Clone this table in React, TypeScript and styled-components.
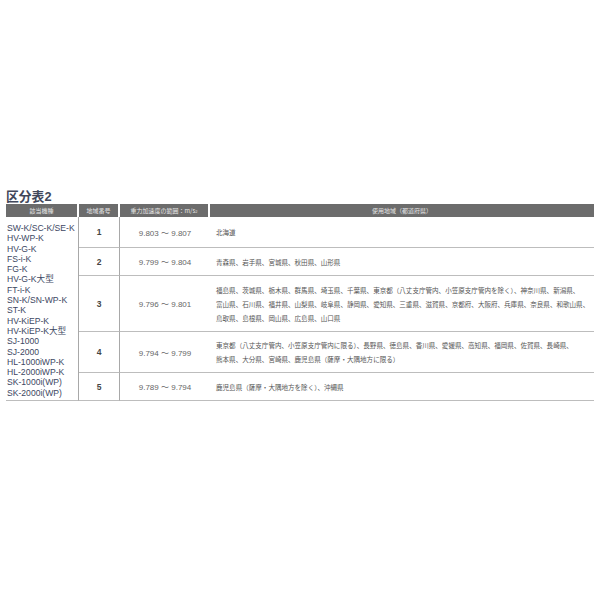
import styled, { createGlobalStyle } from "styled-components";

const GlobalStyle = createGlobalStyle`
  html, body {
    margin: 0;
    padding: 0;
    background: #ffffff;
  }
`;

const Page = styled.div`
  width: 600px;
  height: 600px;
  padding: 190px 6px 0 6px;
  box-sizing: border-box;
  font-family: "Liberation Sans", "Noto Sans CJK JP", sans-serif;
`;

const Title = styled.h2`
  margin: 0;
  font-size: 12.8px;
  line-height: 14px;
  font-weight: 700;
  color: #41475a;
  font-family: "Liberation Sans", "Noto Sans CJK JP", sans-serif;
`;

const Table = styled.div`
  display: grid;
  grid-template-columns: 73px 41px 90px 384px;
  grid-template-rows: 13px 31px 28px 56px 41px 28px;
  width: 588px;
`;

const HeadCell = styled.div<{ last?: boolean }>`
  background: #6c6c6c;
  color: #e6e6e6;
  font-family: "Noto Sans CJK JP", sans-serif;
  font-size: 6px;
  display: flex;
  align-items: center;
  justify-content: center;
  white-space: nowrap;
  border-right: ${(p) => (p.last ? "none" : "2px solid #ffffff")};
  sup {
    font-size: 4px;
    line-height: 0;
  }
`;

const ModelCell = styled.div`
  grid-column: 1;
  grid-row: 2 / 7;
  border-right: 1px solid #a8a8a8;
  border-bottom: 1px solid #bdbdbd;
  padding: 6px 0 0 1px;
  display: flex;
  flex-direction: column;
`;

const Model = styled.span`
  font-size: 8.6px;
  line-height: 10.3px;
  color: #3c4762;
  white-space: nowrap;
`;

const NumCell = styled.div`
  border-right: 1px solid #a8a8a8;
  border-bottom: 1px solid #bdbdbd;
  display: flex;
  align-items: center;
  justify-content: center;
  font-size: 8.5px;
  font-weight: 700;
  color: #454545;
`;

const RangeCell = styled.div`
  border-bottom: 1px solid #bdbdbd;
  display: flex;
  align-items: center;
  justify-content: center;
  font-size: 8px;
  color: #666666;
  white-space: nowrap;
`;

const AreaCell = styled.div`
  border-bottom: 1px solid #bdbdbd;
  display: flex;
  flex-direction: column;
  justify-content: center;
  padding-left: 6px;
  overflow: hidden;
`;

const AreaLine = styled.span`
  font-family: "Noto Sans CJK JP", sans-serif;
  font-size: 6.55px;
  line-height: 14px;
  color: #555555;
  white-space: nowrap;
`;

const models = [
  "SW-K/SC-K/SE-K",
  "HV-WP-K",
  "HV-G-K",
  "FS-i-K",
  "FG-K",
  "HV-G-K大型",
  "FT-i-K",
  "SN-K/SN-WP-K",
  "ST-K",
  "HV-KiEP-K",
  "HV-KiEP-K大型",
  "SJ-1000",
  "SJ-2000",
  "HL-1000iWP-K",
  "HL-2000iWP-K",
  "SK-1000i(WP)",
  "SK-2000i(WP)",
];

const rows = [
  { no: "1", range: "9.803 ～ 9.807", areas: ["北海道"] },
  { no: "2", range: "9.799 ～ 9.804", areas: ["青森県、岩手県、宮城県、秋田県、山形県"] },
  {
    no: "3",
    range: "9.796 ～ 9.801",
    areas: [
      "福島県、茨城県、栃木県、群馬県、埼玉県、千葉県、東京都（八丈支庁管内、小笠原支庁管内を除く）、神奈川県、新潟県、",
      "富山県、石川県、福井県、山梨県、岐阜県、静岡県、愛知県、三重県、滋賀県、京都府、大阪府、兵庫県、奈良県、和歌山県、",
      "鳥取県、島根県、岡山県、広島県、山口県",
    ],
  },
  {
    no: "4",
    range: "9.794 ～ 9.799",
    areas: [
      "東京都（八丈支庁管内、小笠原支庁管内に限る）、長野県、徳島県、香川県、愛媛県、高知県、福岡県、佐賀県、長崎県、",
      "熊本県、大分県、宮崎県、鹿児島県（薩摩・大隅地方に限る）",
    ],
  },
  { no: "5", range: "9.789 ～ 9.794", areas: ["鹿児島県（薩摩・大隅地方を除く）、沖縄県"] },
];

export default function App() {
  return (
    <>
      <GlobalStyle />
      <Page>
        <Title>区分表2</Title>
        <Table>
          <HeadCell>該当機種</HeadCell>
          <HeadCell>地域番号</HeadCell>
          <HeadCell>
            重力加速度の範囲：m/s<sup>2</sup>
          </HeadCell>
          <HeadCell last>使用地域（都道府県）</HeadCell>
          <ModelCell>
            {models.map((m) => (
              <Model key={m}>{m}</Model>
            ))}
          </ModelCell>
          {rows.map((r) => (
            <>
              <NumCell key={r.no + "n"}>{r.no}</NumCell>
              <RangeCell key={r.no + "r"}>{r.range}</RangeCell>
              <AreaCell key={r.no + "a"}>
                {r.areas.map((a) => (
                  <AreaLine key={a}>{a}</AreaLine>
                ))}
              </AreaCell>
            </>
          ))}
        </Table>
      </Page>
    </>
  );
}
